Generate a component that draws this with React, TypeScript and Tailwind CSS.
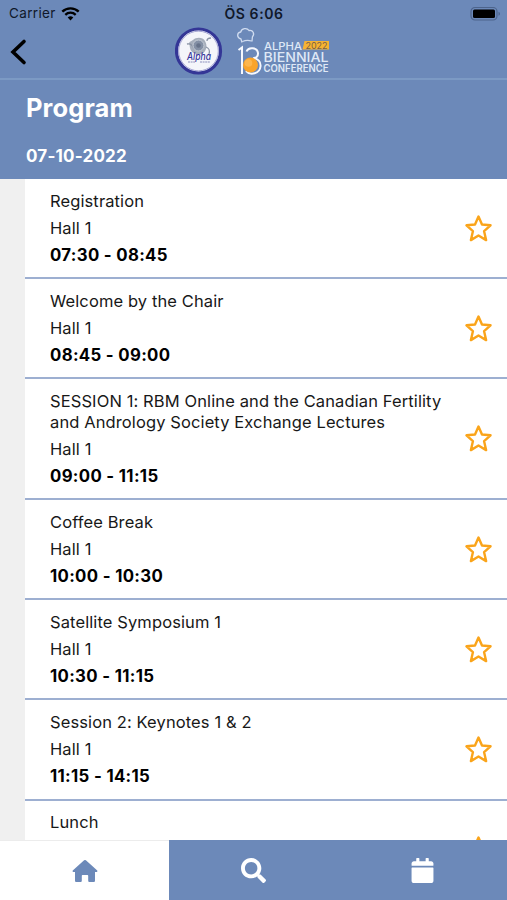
import { FaCalendar, FaSearch } from "react-icons/fa";

const sessions = [
  { title: "Registration", hall: "Hall 1", time: "07:30 - 08:45" },
  { title: "Welcome by the Chair", hall: "Hall 1", time: "08:45 - 09:00" },
  {
    title:
      "SESSION 1: RBM Online and the Canadian Fertility and Andrology Society Exchange Lectures",
    hall: "Hall 1",
    time: "09:00 - 11:15",
  },
  { title: "Coffee Break", hall: "Hall 1", time: "10:00 - 10:30" },
  { title: "Satellite Symposium 1", hall: "Hall 1", time: "10:30 - 11:15" },
  { title: "Session 2: Keynotes 1 & 2", hall: "Hall 1", time: "11:15 - 14:15" },
  { title: "Lunch", hall: "", time: "" },
];

const StatusBar = () => {
  return (
    <div className="grid h-[27px] grid-cols-3 items-center pl-[9px] pr-[6px] text-[13.5px] text-[#10182a]">
      <div className="flex items-center gap-[5px]">
        <span className="tracking-[0.35px]">Carrier</span>
        <svg width="19" height="14" viewBox="0 0 19 14" fill="none" stroke="#000">
          <path d="M1.3 4.7a11.7 11.7 0 0 1 16.4 0" strokeWidth="2.4" />
          <path d="M4.3 7.8a7.5 7.5 0 0 1 10.4 0" strokeWidth="2.3" />
          <path d="M9.5 13.6 6.7 10.6a4 4 0 0 1 5.6 0Z" fill="#000" stroke="none" />
        </svg>
      </div>
      <span className="pr-[2px] text-center text-[14px] font-semibold tracking-[0.6px]">ÖS 6:06</span>
      <svg className="ml-auto" width="31" height="16" viewBox="0 0 31 16">
        <rect x="1" y="1.5" width="26" height="12.5" rx="4" fill="none" stroke="#4d648c" strokeWidth="1.2" />
        <rect x="3" y="3.5" width="22" height="8.5" rx="1.5" fill="#000" />
        <path d="M28.5 5.7c2 .8 2 3.3 0 4.1Z" fill="#4d648c" />
      </svg>
    </div>
  );
};

const AlphaBadge = () => {
  return (
    <svg width="48" height="48" viewBox="0 0 48 48">
      <circle cx="23.5" cy="24" r="22" fill="#f4f5fa" stroke="#343696" strokeWidth="3.2" />
      <circle cx="23.5" cy="24" r="19.8" fill="none" stroke="#8587c4" strokeWidth=".7" />
      <path d="M14 16c1-2 3-2 4-3 3-3 10-3 12 1 3 5 1 11-3 13-6 1-11-1-12-6-.4-2-.3-3-1-5Z" fill="#a6aebb" />
      <path d="M12 17c4-1 6 2 7 5m13-8c0-2 2-3 4-3m-5 9c3 1 4 4 3 7" fill="none" stroke="#8993a4" strokeWidth="1.3" />
      <circle cx="23.5" cy="18.5" r="5.5" fill="#8490a5" stroke="#c5ccd7" />
      <circle cx="23.5" cy="18.5" r="2.3" fill="#667289" />
      <text x="24" y="32.5" textAnchor="middle" fontSize="10" fontStyle="italic" fontWeight="500" fill="#35349b" textLength="24" lengthAdjust="spacingAndGlyphs">
        Alpha
      </text>
      <path d="M13 35h7M25 35h10" stroke="#8c90bc" strokeWidth="1.2" strokeDasharray="2 .6" />
    </svg>
  );
};

const ConferenceLogo = () => {
  return (
    <svg width="96" height="52" viewBox="0 0 96 52">
      <path
        d="M6 15.5 5 12C.5 11 .7 5.5 4.7 5 5.5 1.3 11 .3 13 3.5c4-.9 6 3.5 3.4 6.4L16 14.5M6.5 14.5c3-1.3 6-1.4 9-.5"
        fill="none"
        stroke="#d0dcf0"
        strokeWidth="1.3"
      />
      <path d="M2.5 23 6 20.5V47M10.5 24.5c2-5 11-4 11.5 1.5.2 3-2 5-5 5.5" fill="none" stroke="#f5f8fe" strokeWidth="2" />
      <path d="M17 31.5c5 0 8 3 7.5 8-.7 7-10 9.5-14.5 4.5" fill="none" stroke="#f5f8fe" strokeWidth="2" />
      <circle cx="14.5" cy="38" r="7.5" fill="#f9a42b" />
      <circle cx="12.5" cy="36" r="3.8" fill="#ffc366" opacity=".6" />
      <text x="28" y="23" fontSize="11" fontWeight="500" fill="#dfe8f6" textLength="38" lengthAdjust="spacingAndGlyphs">
        ALPHA
      </text>
      <path d="M68.5 14H93v8.5H66.5Z" fill="#f6b331" />
      <text x="69.5" y="21.5" fontSize="9" fill="#775f49" textLength="22" lengthAdjust="spacingAndGlyphs">
        2022
      </text>
      <text x="27.5" y="35" fontSize="13" fontWeight="500" fill="#dfe8f6" textLength="65" lengthAdjust="spacingAndGlyphs">
        BIENNIAL
      </text>
      <text x="27.5" y="44.5" fontSize="10" fontWeight="600" fill="#dfe8f6" textLength="65" lengthAdjust="spacingAndGlyphs">
        CONFERENCE
      </text>
    </svg>
  );
};

const Header = () => {
  return (
    <header className="h-[179px] shrink-0 bg-[#6c89b9]">
      <StatusBar />
      <div className="grid h-[53px] grid-cols-[1fr_auto_1fr] items-start border-b-2 border-[#7c9ac4]">
        <button aria-label="Back" className="pl-[10px] pt-[11px]">
          <svg width="18" height="28" viewBox="0 0 18 28" fill="none">
            <path d="M14 3.5 3 14l11 10.5" stroke="#000" strokeWidth="3.6" strokeLinecap="round" />
          </svg>
        </button>
        <div className="flex gap-[13px] pr-px">
          <AlphaBadge />
          <ConferenceLogo />
        </div>
      </div>
      <div className="px-[26px] pt-[11px] font-bold text-white">
        <h1 className="text-[25.5px] leading-[34px] tracking-[0.1px]">Program</h1>
        <p className="mt-[21px] text-[17px] leading-[20px] tracking-[0.2px]">07-10-2022</p>
      </div>
    </header>
  );
};

const Star = () => {
  return (
    <svg className="mr-px shrink-0" width="27" height="27" viewBox="0 0 27 27" fill="none">
      <path
        d="m13.5 1.5 3.5 8 8.5.8-6.4 5.9 2 8.9-7.600-4.600-7.600 4.600 2-8.900-6.400-5.900 8.500-.8Z"
        stroke="#faa41a"
        strokeWidth="2.4"
        strokeLinejoin="round"
      />
    </svg>
  );
};

const BottomNav = () => {
  return (
    <nav className="grid h-[60px] shrink-0 grid-cols-3 bg-[#6c89b9] text-white">
      <button aria-label="Home" className="flex items-center justify-center border-t border-[#ececec] bg-white text-[#6c89b9]">
        <svg width="26" height="24" viewBox="0 0 26 24" fill="currentColor">
          <path d="M12.1 1.3a1.4 1.4 0 0 1 1.8 0L25 11.2c.8.8.4 1.8-.7 1.8H23v8.5c0 1-.6 1.5-1.5 1.5h-3.8c-1 0-1.5-.5-1.5-1.5V17c0-.7-.4-1-1-1h-4.4c-.6 0-1 .3-1 1v4.5c0 1-.5 1.5-1.5 1.5H4.5c-1 0-1.5-.5-1.5-1.5V13H1.7C.6 13 .2 12 1 11.2Z" />
        </svg>
      </button>
      <button aria-label="Search" className="flex items-center justify-center">
        <FaSearch size={25} />
      </button>
      <button aria-label="Calendar" className="flex items-center justify-center">
        <FaCalendar size={25} />
      </button>
    </nav>
  );
};

const App = () => {
  return (
    <div className="flex h-[900px] w-[507px] flex-col overflow-hidden bg-[#f0f0f0] font-['Inter',sans-serif]">
      <Header />
      <main className="min-h-0 flex-1 overflow-hidden pl-[25px]">
        {sessions.map((session) => (
          <div
            key={session.title}
            className="flex min-h-[100.2px] items-center border-b-2 border-[#9dafd1] bg-white py-[11.9px] pl-[25px] pr-[14px]"
          >
            <div className="flex flex-1 flex-col gap-[6.25px] self-start text-[16.5px] leading-[20.6px] tracking-[0.11px] text-[#181818]">
              <p className="max-w-[404px]">{session.title}</p>
              {session.hall && <p>{session.hall}</p>}
              {session.time && (
                <p className="text-[16.8px] font-bold tracking-[0.32px] text-black">{session.time}</p>
              )}
            </div>
            <Star />
          </div>
        ))}
      </main>
      <BottomNav />
    </div>
  );
};

export default App;
